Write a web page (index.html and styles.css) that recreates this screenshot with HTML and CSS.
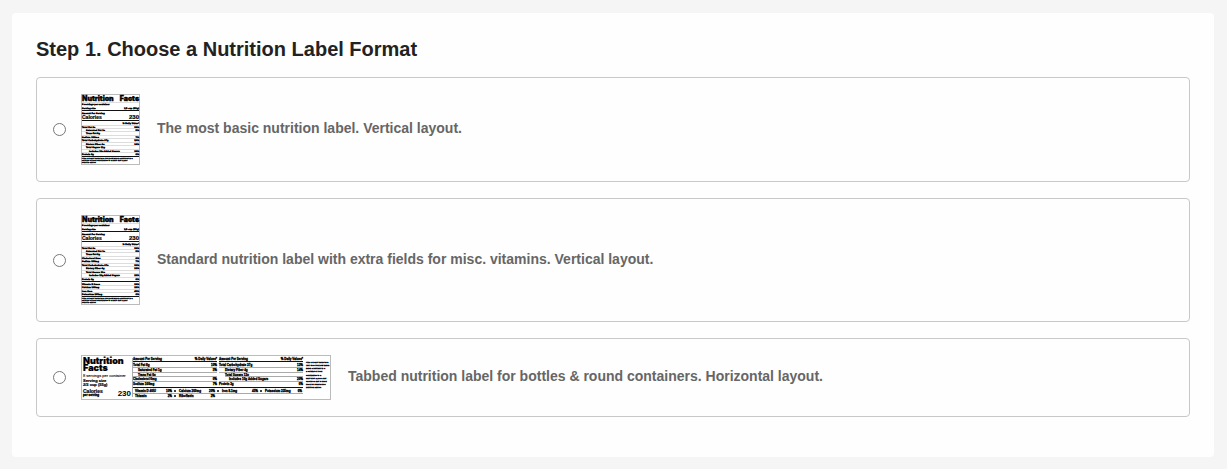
FILE: index.html
```html
<!DOCTYPE html>
<html lang="en">
<head>
<meta charset="utf-8">
<meta name="viewport" content="width=device-width, initial-scale=1">
<title>Choose a Nutrition Label Format</title>
<link rel="stylesheet" href="styles.css">
</head>
<body>
<main class="panel">
  <h1 class="title" id="step-title">Step 1. Choose a Nutrition Label Format</h1>
  <div class="options" role="radiogroup" aria-labelledby="step-title">
    <label class="option">
      <input class="radio" type="radio" name="format" value="basic">
      <svg class="thumb" width="59" height="71" viewBox="0 0 59 71" aria-hidden="true">
        <rect class="frame" x=".5" y=".5" width="58" height="70"/>
        <g class="name"><text x="1" y="7">Nutrition</text><text class="end" x="58" y="7">Facts</text></g>
        <g class="fine">
          <text x="1" y="11">8 servings per container</text>
          <text x="1" y="15">Serving size</text><text class="end" x="58" y="15">2/3 cup (55g)</text>
          <text x="1" y="20">Amount Per Serving</text>
          <text class="end" x="58" y="30">% Daily Value*</text>
          <text x="1" y="34">Total Fat 8g</text><text class="end" x="58" y="34">10%</text>
          <text x="5" y="37">Saturated Fat 1g</text><text class="end" x="58" y="37">5%</text>
          <text x="5" y="40">Trans Fat 0g</text>
          <text x="1" y="44">Sodium 160mg</text><text class="end" x="58" y="44">7%</text>
          <text x="1" y="47">Total Carbohydrate 37g</text><text class="end" x="58" y="47">13%</text>
          <text x="5" y="51">Dietary Fiber 4g</text><text class="end" x="58" y="51">14%</text>
          <text x="5" y="54">Total Sugars 12g</text>
          <text x="8" y="58">Includes 10g Added Sugars</text><text class="end" x="58" y="58">20%</text>
          <text x="1" y="61">Protein 3g</text><text class="end" x="58" y="61">6%</text>
        </g>
        <g class="note">
          <text x="1" y="65">*The % Daily Value tells you how much a nutrient in a</text>
          <text x="1" y="67">serving of food contributes to a daily diet. 2,000</text>
          <text x="1" y="69">general advice</text>
        </g>
        <text class="calories" x="1" y="25">Calories</text><text class="calories calories-value end" x="58" y="25">230</text>
        <path class="bar" d="M1 16.5h57M1 26.5h57M1 62.5h57"/>
        <path class="rule" d="M1 8.5h57M1 31.5h57M1 34.5h57M1 37.5h57M1 41.5h57M1 44.5h57M1 48.5h57M1 51.5h57M1 55.5h57M1 58.5h57"/>
      </svg>
      <span class="text">The most basic nutrition label. Vertical layout.</span>
    </label>

    <label class="option">
      <input class="radio" type="radio" name="format" value="standard">
      <svg class="thumb" width="59" height="90" viewBox="0 0 59 90" aria-hidden="true">
        <rect class="frame" x=".5" y=".5" width="58" height="89"/>
        <g class="name"><text x="1" y="7">Nutrition</text><text class="end" x="58" y="7">Facts</text></g>
        <g class="fine">
          <text x="1" y="11">8 servings per container</text>
          <text x="1" y="15">Serving size</text><text class="end" x="58" y="15">2/3 cup (55g)</text>
          <text x="1" y="20">Amount Per Serving</text>
          <text class="end" x="58" y="30">% Daily Value*</text>
          <text x="1" y="34">Total Fat 8g</text><text class="end" x="58" y="34">10%</text>
          <text x="5" y="37">Saturated Fat 1g</text><text class="end" x="58" y="37">5%</text>
          <text x="5" y="40">Trans Fat 0g</text>
          <text x="1" y="44">Cholesterol 0mg</text><text class="end" x="58" y="44">0%</text>
          <text x="1" y="47">Sodium 160mg</text><text class="end" x="58" y="47">7%</text>
          <text x="1" y="51">Total Carbohydrate 37g</text><text class="end" x="58" y="51">13%</text>
          <text x="5" y="54">Dietary Fiber 4g</text><text class="end" x="58" y="54">14%</text>
          <text x="5" y="58">Total Sugars 12g</text>
          <text x="8" y="61">Includes 10g Added Sugars</text><text class="end" x="58" y="61">20%</text>
          <text x="1" y="65">Protein 3g</text><text class="end" x="58" y="65">6%</text>
          <text x="1" y="70">Vitamin D 2mcg</text><text class="end" x="58" y="70">10%</text>
          <text x="1" y="73">Calcium 260mg</text><text class="end" x="58" y="73">20%</text>
          <text x="1" y="77">Iron 8mg</text><text class="end" x="58" y="77">45%</text>
          <text x="1" y="80">Potassium 235mg</text><text class="end" x="58" y="80">6%</text>
        </g>
        <g class="note">
          <text x="1" y="84">*The % Daily Value tells you how much a nutrient in a</text>
          <text x="1" y="86">serving of food contributes to a daily diet. 2,000</text>
          <text x="1" y="88">general advice</text>
        </g>
        <text class="calories" x="1" y="25">Calories</text><text class="calories calories-value end" x="58" y="25">230</text>
        <path class="bar" d="M1 16.5h57M1 26.5h57M1 66.5h57M1 81.5h57"/>
        <path class="rule" d="M1 8.5h57M1 31.5h57M1 34.5h57M1 37.5h57M1 41.5h57M1 44.5h57M1 48.5h57M1 51.5h57M1 55.5h57M1 58.5h57M1 62.5h57M1 70.5h57M1 74.5h57M1 77.5h57"/>
      </svg>
      <span class="text">Standard nutrition label with extra fields for misc. vitamins. Vertical layout.</span>
    </label>

    <label class="option">
      <input class="radio" type="radio" name="format" value="tabbed">
      <svg class="thumb" width="250" height="45" viewBox="0 0 250 45" aria-hidden="true">
        <rect class="frame" x=".5" y=".5" width="249" height="44"/>
        <text class="name name-wide"><tspan x="2" y="9">Nutrition</tspan><tspan x="2" y="16">Facts</tspan></text>
        <text class="servings" x="2" y="22">8 servings per container</text>
        <g class="serving-size"><text x="2" y="27">Serving size</text><text x="2" y="31">2/3 cup (55g)</text></g>
        <text class="calories calories-wide" x="2" y="38">Calories</text>
        <text class="small" x="2" y="41">per serving</text>
        <text class="amount end" x="50" y="41">230</text>
        <g class="small">
          <text x="52" y="5">Amount Per Serving</text><text class="end" x="136" y="5">% Daily Values*</text>
          <text x="52" y="11">Total Fat 8g</text><text class="end" x="136" y="11">10%</text>
          <text x="57" y="16">Saturated Fat 1g</text><text class="end" x="136" y="16">5%</text>
          <text x="57" y="21">Trans Fat 0g</text>
          <text x="52" y="25">Cholesterol 0mg</text><text class="end" x="136" y="25">0%</text>
          <text x="52" y="30">Sodium 160mg</text><text class="end" x="136" y="30">7%</text>
          <text x="138" y="5">Amount Per Serving</text><text class="end" x="222" y="5">% Daily Values*</text>
          <text x="138" y="11">Total Carbohydrate 37g</text><text class="end" x="222" y="11">13%</text>
          <text x="144" y="16">Dietary Fiber 4g</text><text class="end" x="222" y="16">14%</text>
          <text x="144" y="21">Total Sugars 12g</text>
          <text x="148" y="25">Includes 10g Added Sugars</text><text class="end" x="222" y="25">20%</text>
          <text x="138" y="30">Protein 3g</text><text class="end" x="222" y="30">6%</text>
          <text x="54" y="37">Vitamin D 40IU</text><text class="end" x="91" y="37">10%</text>
          <text x="98" y="37">Calcium 260mg</text><text class="end" x="134" y="37">20%</text>
          <text x="141" y="37">Iron 8.1mg</text><text class="end" x="177" y="37">45%</text>
          <text x="184" y="37">Potassium 235mg</text><text class="end" x="221" y="37">6%</text>
          <text x="54" y="42">Thiamin</text><text class="end" x="91" y="42">2%</text>
          <text x="98" y="42">Riboflavin</text><text class="end" x="134" y="42">2%</text>
        </g>
        <g class="dot"><circle cx="94" cy="36" r="1"/><circle cx="137" cy="36" r="1"/><circle cx="180" cy="36" r="1"/><circle cx="94" cy="41" r="1"/></g>
        <g class="note">
          <text x="225" y="8">*The % Daily Value tells</text><text x="225" y="11">(DV) tells you how much</text>
          <text x="225" y="14">much a nutrient in a</text><text x="225" y="17">a serving of food</text>
          <text x="225" y="21">contributes to a</text><text x="225" y="24">daily diet. 2,000 a day</text>
          <text x="225" y="27">calories a day is used</text><text x="225" y="30">used for general use</text>
          <text x="225" y="33">nutrition advice.</text>
        </g>
        <path class="bar" d="M52 6.5h84M138 6.5h84M52 32.5h170"/>
        <path class="rule rule-dark" d="M51.5 3v39M52 12.5h84M138 12.5h84M52 17.5h84M138 17.5h84M52 21.5h84M144 21.5h78M52 26.5h84M138 26.5h84M52 38.5h170"/>
      </svg>
      <span class="text">Tabbed nutrition label for bottles &amp; round containers. Horizontal layout.</span>
    </label>
  </div>
</main>
</body>
</html>
```
FILE: styles.css
```css
* {
  box-sizing: border-box;
}

body {
  margin: 0;
  padding: 13px 13px 12px 12px;
  background: #f5f5f5;
  font-family: Arial, "Liberation Sans", sans-serif;
}

.panel {
  padding: 24px 24px 40px;
  border-radius: 4px;
  background: #fefefe;
}

.title {
  margin: 0 0 16px;
  color: #222;
  font-size: 20px;
  font-weight: bold;
  line-height: 24px;
}

.options {
  display: flex;
  flex-direction: column;
  gap: 16px;
}

.option {
  display: flex;
  align-items: center;
  padding: 16px;
  border: 1px solid #c8c8c8;
  border-radius: 4px;
  cursor: pointer;
}

.radio {
  flex: none;
  width: 13px;
  height: 13px;
  margin: 0 15px 0 0;
}

.thumb {
  flex: none;
  margin-right: 17px;
}

.text {
  padding-bottom: 3px;
  color: #666;
  font-size: 14px;
  font-weight: bold;
  line-height: 20px;
}

.frame {
  fill: #fff;
  stroke: #bbb;
}

.end {
  text-anchor: end;
}

.name {
  font: 900 7px Inter, sans-serif;
  stroke: #000;
  stroke-width: .4px;
}

.name-wide {
  font-size: 9px;
  stroke-width: .2px;
}

.fine {
  font: bold 2px "DejaVu Sans", sans-serif;
  stroke: #000;
  stroke-width: .4px;
}

.note {
  font-size: 2px;
  font-weight: bold;
  stroke: #000;
  stroke-width: .3px;
}

.small {
  font-size: 3px;
  font-weight: bold;
  stroke: #000;
  stroke-width: .3px;
}

.calories {
  font-size: 5px;
  font-weight: bold;
  stroke: #000;
  stroke-width: .2px;
}

.calories-value {
  font-size: 6px;
}

.servings {
  font-size: 4px;
  stroke: #000;
  stroke-width: .1px;
}

.serving-size {
  font-size: 4px;
  font-weight: bold;
  stroke: #000;
  stroke-width: .2px;
}

.amount {
  font-size: 8px;
  font-weight: bold;
}

.bar {
  fill: none;
  stroke: #111;
}

.rule {
  fill: none;
  stroke: #ddd;
}

.rule-dark {
  stroke: #aaa;
}
```
